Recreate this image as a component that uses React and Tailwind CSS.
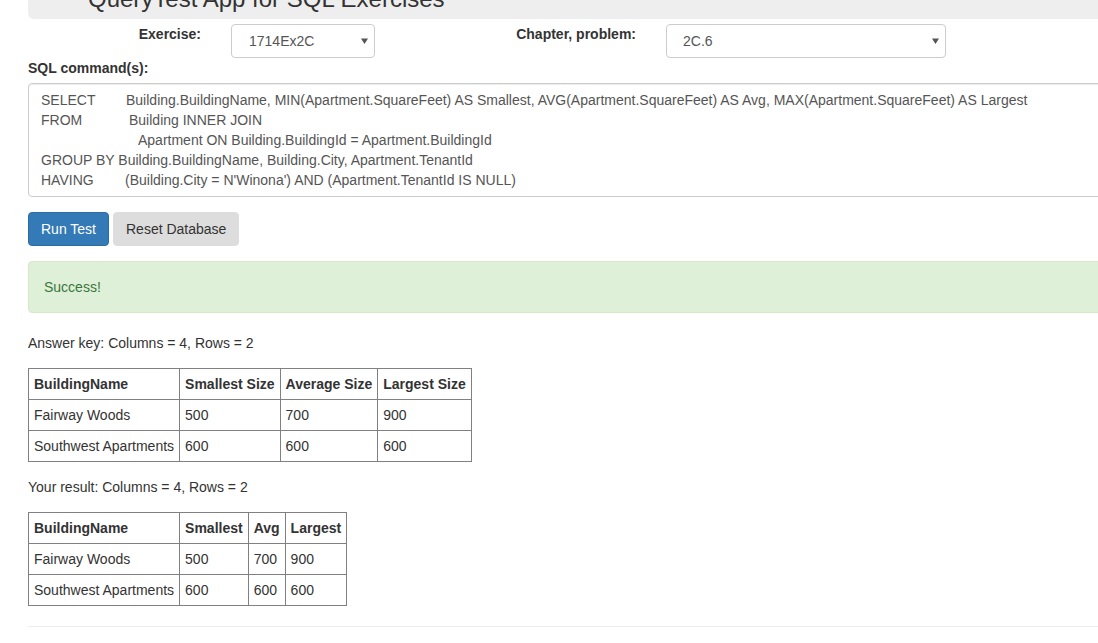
function Caret() {
  return (
    <svg width="7" height="6" viewBox="0 0 7 6" className="shrink-0">
      <path d="M0 0.5 L7 0.5 L3.5 6 Z" fill="#555" />
    </svg>
  );
}

function DataTable({ headers, rows }) {
  return (
    <table className="border-collapse">
      <thead>
        <tr>
          {headers.map((h) => (
            <th key={h} className="border border-[#808080] px-[5px] py-[5px] text-left font-bold">
              {h}
            </th>
          ))}
        </tr>
      </thead>
      <tbody>
        {rows.map((r, i) => (
          <tr key={i}>
            {r.map((c, j) => (
              <td key={j} className="border border-[#808080] px-[5px] py-[5px]">
                {c}
              </td>
            ))}
          </tr>
        ))}
      </tbody>
    </table>
  );
}

export default function App() {
  const rows = [
    ["Fairway Woods", "500", "700", "900"],
    ["Southwest Apartments", "600", "600", "600"],
  ];
  return (
    <div className="w-[1098px] h-[643px] overflow-hidden bg-white text-[14px] leading-[20px] text-[#333] font-['Liberation_Sans',Arial,sans-serif]">
      <div className="ml-[28px] w-[1120px]">
        <div className="-mt-[33px] pt-[20px] pb-[8px] pl-[60px] bg-[#eee] rounded-[6px]">
          <div className="text-[24px] leading-[24px] text-[#333]">QueryTest App for SQL Exercises</div>
        </div>

        <div className="flex items-start h-[34px] mt-[5px]">
          <div className="w-[173px] text-right font-bold">Exercise:</div>
          <div className="ml-[30px] w-[144px] h-[34px] border border-[#ccc] rounded-[4px] flex items-center justify-between pl-[17px] pr-[6px] text-[#555]">
            <span>1714Ex2C</span>
            <Caret />
          </div>
          <div className="w-[261px] text-right font-bold">Chapter, problem:</div>
          <div className="ml-[30px] w-[280px] h-[34px] border border-[#ccc] rounded-[4px] flex items-center justify-between pl-[16px] pr-[6px] text-[#555]">
            <span>2C.6</span>
            <Caret />
          </div>
        </div>

        <div className="font-bold mb-[5px]">SQL command(s):</div>

        <div className="h-[114px] border border-[#ccc] rounded-[4px] pt-[6px] pb-[6px] pl-[12px] text-[#555] whitespace-pre shadow-[inset_0_1px_1px_rgba(0,0,0,0.075)]">
          <div>
            <span className="inline-block w-[85px]">SELECT</span>
            Building.BuildingName, MIN(Apartment.SquareFeet) AS Smallest, AVG(Apartment.SquareFeet) AS Avg, MAX(Apartment.SquareFeet) AS Largest
          </div>
          <div>
            <span className="inline-block w-[88px]">FROM</span>
            Building INNER JOIN
          </div>
          <div>
            <span className="inline-block w-[97px]"></span>
            Apartment ON Building.BuildingId = Apartment.BuildingId
          </div>
          <div>GROUP BY Building.BuildingName, Building.City, Apartment.TenantId</div>
          <div>
            <span className="inline-block w-[84px]">HAVING</span>
            (Building.City = N'Winona') AND (Apartment.TenantId IS NULL)
          </div>
        </div>

        <div className="flex gap-[4px] mt-[15px]">
          <div className="px-[12px] py-[6px] bg-[#337ab7] border border-[#2e6da4] text-white rounded-[4px]">Run Test</div>
          <div className="px-[12px] py-[6px] bg-[#ddd] border border-[#ddd] text-[#333] rounded-[4px]">Reset Database</div>
        </div>

        <div className="mt-[15px] mb-[20px] p-[15px] bg-[#dff0d8] border border-[#d6e9c6] text-[#3c763d] rounded-[4px]">
          Success!
        </div>

        <div>Answer key: Columns = 4, Rows = 2</div>
        <div className="mt-[15px]">
          <DataTable headers={["BuildingName", "Smallest Size", "Average Size", "Largest Size"]} rows={rows} />
        </div>

        <div className="mt-[15px]">Your result: Columns = 4, Rows = 2</div>
        <div className="mt-[15px]">
          <DataTable headers={["BuildingName", "Smallest", "Avg", "Largest"]} rows={rows} />
        </div>

        <div className="mt-[20px] border-t border-[#eee]"></div>
      </div>
    </div>
  );
}
